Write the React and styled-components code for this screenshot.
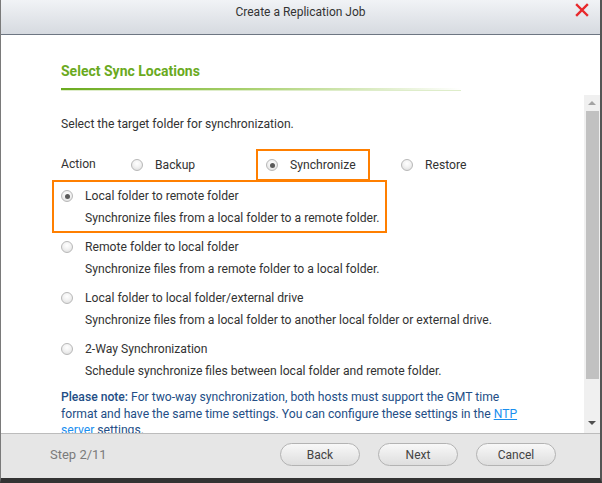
import React from 'react';
import styled, { createGlobalStyle } from 'styled-components';

const GlobalStyle = createGlobalStyle`
  html, body {
    margin: 0;
    padding: 0;
    background: #ffffff;
  }
  body {
    font-family: Roboto, "Liberation Sans", sans-serif;
    color: #333;
  }
`;

const Dialog = styled.div`
  width: 602px;
  height: 483px;
  box-sizing: border-box;
  display: flex;
  flex-direction: column;
  background: #fff;
  border-left: 1px solid #7a7a7a;
  border-right: 2px solid #555;
  border-bottom: 5px solid #333;
  overflow: hidden;
`;

const TitleBar = styled.div`
  position: relative;
  height: 35px;
  flex: none;
  box-sizing: border-box;
  padding-top: 5px;
  text-align: center;
  font-size: 12px;
  color: #333;
  background: linear-gradient(#f1f3f6, #d6dae0);
  border-bottom: 1px solid #6d7682;
`;

const CloseButton = styled.button`
  position: absolute;
  top: 3px;
  right: 11px;
  width: 14px;
  height: 14px;
  padding: 0;
  border: 0;
  background: none;
  cursor: pointer;
`;

const Body = styled.div`
  flex: 1;
  display: flex;
  flex-direction: column;
  min-height: 0;
`;

const Header = styled.div`
  padding: 27px 0 0 60px;
  flex: none;
`;

const Heading = styled.h2`
  margin: 0;
  font-size: 14px;
  font-weight: 700;
  line-height: 18px;
  color: #6aaa1e;
`;

const HeadingRule = styled.div`
  margin-top: 8px;
  width: 400px;
  height: 2px;
  background: linear-gradient(90deg, #6aaa1e 0%, #a6cf6a 45%, rgba(255, 255, 255, 0) 100%);
  box-shadow: 0 1px 0 rgba(190, 220, 150, 0.5);
`;

const ScrollRow = styled.div`
  flex: 1;
  display: flex;
  min-height: 0;
  margin-top: 5px;
`;

const ScrollContent = styled.div`
  flex: 1;
  overflow: hidden;
  padding: 21px 0 0 52px;
  font-size: 12.15px;
  color: #333;
`;

const Intro = styled.p`
  margin: 0 0 0 8px;
  line-height: 16px;
`;

const ActionRow = styled.div`
  display: flex;
  align-items: center;
  margin-top: 17px;
  padding-left: 8px;
`;

const ActionLabel = styled.span`
  width: 60px;
  line-height: 16px;
  margin-top: -2px;
`;

const Choice = styled.label`
  box-sizing: border-box;
  display: flex;
  align-items: center;
  gap: 12px;
  height: 32px;
  width: ${(p) => p.$width || 'auto'};
  margin-right: ${(p) => p.$gap || '0'};
  padding: 0 10px 0 8px;
  border: 2px solid ${(p) => (p.$highlight ? '#ff7f00' : 'transparent')};
  position: relative;
  z-index: 1;
`;

const Radio = styled.span`
  box-sizing: border-box;
  flex: none;
  width: 12px;
  height: 12px;
  border-radius: 50%;
  border: 1px solid #b8b8b8;
  background: radial-gradient(circle at 50% 35%, #ffffff 0%, #f2f2f2 45%, #d9d9d9 100%);
  display: flex;
  align-items: center;
  justify-content: center;

  &::after {
    content: '';
    width: 5px;
    height: 5px;
    border-radius: 50%;
    background: #5a5a5a;
    display: ${(p) => (p.$checked ? 'block' : 'none')};
  }
`;

const Option = styled.div`
  box-sizing: border-box;
  width: 333px;
  height: 51px;
  padding: 6px 8px 0 8px;
  outline: ${(p) => (p.$highlight ? '2px solid #ff7f00' : 'none')};
  outline-offset: -1px;
`;

const OptionTitle = styled.div`
  display: flex;
  align-items: center;
  gap: 12px;
  line-height: 18px;
`;

const OptionText = styled.div`
  margin: 4px 0 0 24px;
  line-height: 18px;
  white-space: nowrap;
`;

const Note = styled.p`
  margin: 4px 0 0 8px;
  width: 460px;
  line-height: 16.5px;
  color: #234e86;
`;

const NoteLead = styled.span`
  font-weight: 500;
`;

const NoteLink = styled.a`
  color: #1a8fef;
  text-decoration: underline;
`;

const Scrollbar = styled.div`
  flex: none;
  width: 16px;
  display: flex;
  flex-direction: column;
  align-items: center;
  background: #f0f0f0;
`;

const Arrow = styled.span`
  width: 0;
  height: 0;
  border-left: 4px solid transparent;
  border-right: 4px solid transparent;
  ${(p) =>
    p.$down
      ? 'border-top: 4px solid #505050; margin: auto 0 8px;'
      : 'border-bottom: 4px solid #a3a3a3; margin: 6px 0 6px;'}
`;

const Thumb = styled.div`
  width: 13px;
  height: 268px;
  background: #c1c1c1;
`;

const Footer = styled.div`
  flex: none;
  height: 45px;
  box-sizing: border-box;
  display: flex;
  align-items: center;
  padding: 0 44px 3px 49px;
  background: #e6e6e6;
  border-top: 1px solid #bcbcbc;
`;

const StepLabel = styled.span`
  flex: 1;
  font-size: 13px;
  color: #7b7b7b;
`;

const Buttons = styled.div`
  display: flex;
  gap: 18px;
`;

const Button = styled.button`
  width: 80px;
  height: 23px;
  border-radius: 12px;
  border: 1px solid #b3b3b3;
  background: linear-gradient(#f8f8f8, #dedede);
  font-family: Roboto, "Liberation Sans", sans-serif;
  font-size: 12px;
  color: #444;
  cursor: pointer;
`;

const options = [
  {
    title: 'Local folder to remote folder',
    text: 'Synchronize files from a local folder to a remote folder.',
    checked: true,
  },
  {
    title: 'Remote folder to local folder',
    text: 'Synchronize files from a remote folder to a local folder.',
  },
  {
    title: 'Local folder to local folder/external drive',
    text: 'Synchronize files from a local folder to another local folder or external drive.',
  },
  {
    title: '2-Way Synchronization',
    text: 'Schedule synchronize files between local folder and remote folder.',
  },
];

const App = () => {
  return (
    <>
      <GlobalStyle />
      <Dialog>
        <TitleBar>
          Create a Replication Job
          <CloseButton aria-label="Close">
            <svg width="14" height="14" viewBox="0 0 14 14">
              <path d="M2 2 L12 12 M12 2 L2 12" stroke="#e8282b" strokeWidth="2.4" strokeLinecap="square" />
            </svg>
          </CloseButton>
        </TitleBar>

        <Body>
          <Header>
            <Heading>Select Sync Locations</Heading>
            <HeadingRule />
          </Header>

          <ScrollRow>
            <ScrollContent>
              <Intro>Select the target folder for synchronization.</Intro>

              <ActionRow>
                <ActionLabel>Action</ActionLabel>
                <Choice $width="135px">
                  <Radio />
                  Backup
                </Choice>
                <Choice $width="114px" $gap="21px" $highlight>
                  <Radio $checked />
                  Synchronize
                </Choice>
                <Choice>
                  <Radio />
                  Restore
                </Choice>
              </ActionRow>

              {options.map((o) => (
                <Option key={o.title} $highlight={o.checked}>
                  <OptionTitle>
                    <Radio $checked={o.checked} />
                    {o.title}
                  </OptionTitle>
                  <OptionText>{o.text}</OptionText>
                </Option>
              ))}

              <Note>
                <NoteLead>Please note:</NoteLead> For two-way synchronization, both hosts must support the GMT time
                format and have the same time settings. You can configure these settings in the{' '}
                <NoteLink href="#">NTP server</NoteLink> settings.
              </Note>
            </ScrollContent>

            <Scrollbar>
              <Arrow />
              <Thumb />
              <Arrow $down />
            </Scrollbar>
          </ScrollRow>
        </Body>

        <Footer>
          <StepLabel>Step 2/11</StepLabel>
          <Buttons>
            <Button>Back</Button>
            <Button>Next</Button>
            <Button>Cancel</Button>
          </Buttons>
        </Footer>
      </Dialog>
    </>
  );
};

export default App;
